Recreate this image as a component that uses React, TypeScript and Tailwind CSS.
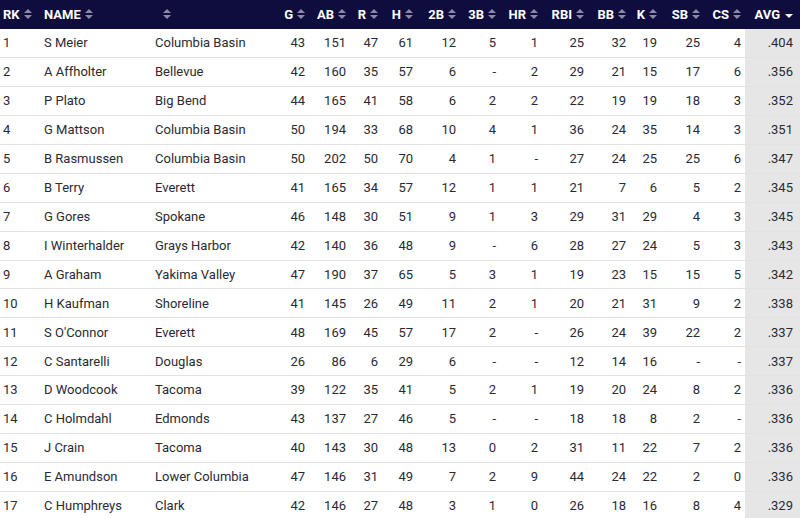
import React from "react";

type Row = [number, string, string, ...string[]];

const rows: Row[] = [
  [1, "S Meier", "Columbia Basin", "43", "151", "47", "61", "12", "5", "1", "25", "32", "19", "25", "4", ".404"],
  [2, "A Affholter", "Bellevue", "42", "160", "35", "57", "6", "-", "2", "29", "21", "15", "17", "6", ".356"],
  [3, "P Plato", "Big Bend", "44", "165", "41", "58", "6", "2", "2", "22", "19", "19", "18", "3", ".352"],
  [4, "G Mattson", "Columbia Basin", "50", "194", "33", "68", "10", "4", "1", "36", "24", "35", "14", "3", ".351"],
  [5, "B Rasmussen", "Columbia Basin", "50", "202", "50", "70", "4", "1", "-", "27", "24", "25", "25", "6", ".347"],
  [6, "B Terry", "Everett", "41", "165", "34", "57", "12", "1", "1", "21", "7", "6", "5", "2", ".345"],
  [7, "G Gores", "Spokane", "46", "148", "30", "51", "9", "1", "3", "29", "31", "29", "4", "3", ".345"],
  [8, "I Winterhalder", "Grays Harbor", "42", "140", "36", "48", "9", "-", "6", "28", "27", "24", "5", "3", ".343"],
  [9, "A Graham", "Yakima Valley", "47", "190", "37", "65", "5", "3", "1", "19", "23", "15", "15", "5", ".342"],
  [10, "H Kaufman", "Shoreline", "41", "145", "26", "49", "11", "2", "1", "20", "21", "31", "9", "2", ".338"],
  [11, "S O'Connor", "Everett", "48", "169", "45", "57", "17", "2", "-", "26", "24", "39", "22", "2", ".337"],
  [12, "C Santarelli", "Douglas", "26", "86", "6", "29", "6", "-", "-", "12", "14", "16", "-", "-", ".337"],
  [13, "D Woodcook", "Tacoma", "39", "122", "35", "41", "5", "2", "1", "19", "20", "24", "8", "2", ".336"],
  [14, "C Holmdahl", "Edmonds", "43", "137", "27", "46", "5", "-", "-", "18", "18", "8", "2", "-", ".336"],
  [15, "J Crain", "Tacoma", "40", "143", "30", "48", "13", "0", "2", "31", "11", "22", "7", "2", ".336"],
  [16, "E Amundson", "Lower Columbia", "47", "146", "31", "49", "7", "2", "9", "44", "24", "22", "2", "0", ".336"],
  [17, "C Humphreys", "Clark", "42", "146", "27", "48", "3", "1", "0", "26", "18", "16", "8", "4", ".329"],
];

const statCols = [
  { label: "G", w: "w-[39px]" },
  { label: "AB", w: "w-[41px]" },
  { label: "R", w: "w-[32px]" },
  { label: "H", w: "w-[35px]" },
  { label: "2B", w: "w-[43px]" },
  { label: "3B", w: "w-[40px]" },
  { label: "HR", w: "w-[42px]" },
  { label: "RBI", w: "w-[46px]" },
  { label: "BB", w: "w-[42px]" },
  { label: "K", w: "w-[31px]" },
  { label: "SB", w: "w-[43px]" },
  { label: "CS", w: "w-[41px]" },
];

const SortIcon = () => (
  <svg width="8" height="12" viewBox="0 0 8 12" className="inline-block ml-[4px] align-[-1px]">
    <path d="M0 5 L4 1 L8 5 Z" fill="#8a8aa8" />
    <path d="M0 7 L4 11 L8 7 Z" fill="#8a8aa8" />
  </svg>
);

const DownIcon = () => (
  <svg width="8" height="12" viewBox="0 0 8 12" className="inline-block ml-[5px] align-[-2px]">
    <path d="M0 5 L4 9 L8 5 Z" fill="#ffffff" />
  </svg>
);

export default function App() {
  return (
    <div className="w-[800px] h-[518px] overflow-hidden bg-white font-['Roboto',sans-serif]">
      <table className="table-fixed border-collapse w-[800px]">
        <colgroup>
          <col className="w-[40px]" />
          <col className="w-[111px]" />
          <col className="w-[119px]" />
          {statCols.map((c) => (
            <col key={c.label} className={c.w} />
          ))}
          <col className="w-[55px]" />
        </colgroup>
        <thead>
          <tr className="bg-[#0e0d3e] h-[28.5px] text-white text-[13px] font-bold">
            <th className="text-left pl-[3px] font-bold">
              RK<SortIcon />
            </th>
            <th className="text-left pl-[4px] font-bold">
              NAME<SortIcon />
            </th>
            <th className="text-left pl-[8px] font-bold">
              <SortIcon />
            </th>
            {statCols.map((c) => (
              <th key={c.label} className="text-right pr-[4px] font-bold whitespace-nowrap">
                {c.label}
                <SortIcon />
              </th>
            ))}
            <th className="text-right pr-[7px] font-bold whitespace-nowrap">
              AVG<DownIcon />
            </th>
          </tr>
        </thead>
        <tbody className="text-[13px] text-[#2a2a33]">
          {rows.map((r) => (
            <tr key={r[0]} className="h-[28.94px] border-b border-[#e2e2e6]">
              <td className="pl-[3px]">{r[0]}</td>
              <td className="pl-[4px] whitespace-nowrap">{r[1]}</td>
              <td className="pl-[4px] whitespace-nowrap">{r[2]}</td>
              {r.slice(3, 15).map((v, i) => (
                <td key={i} className="text-right pr-[4px]">
                  {v}
                </td>
              ))}
              <td className="text-right pr-[7px] bg-[#e6e6e6]">{r[15]}</td>
            </tr>
          ))}
        </tbody>
      </table>
    </div>
  );
}
